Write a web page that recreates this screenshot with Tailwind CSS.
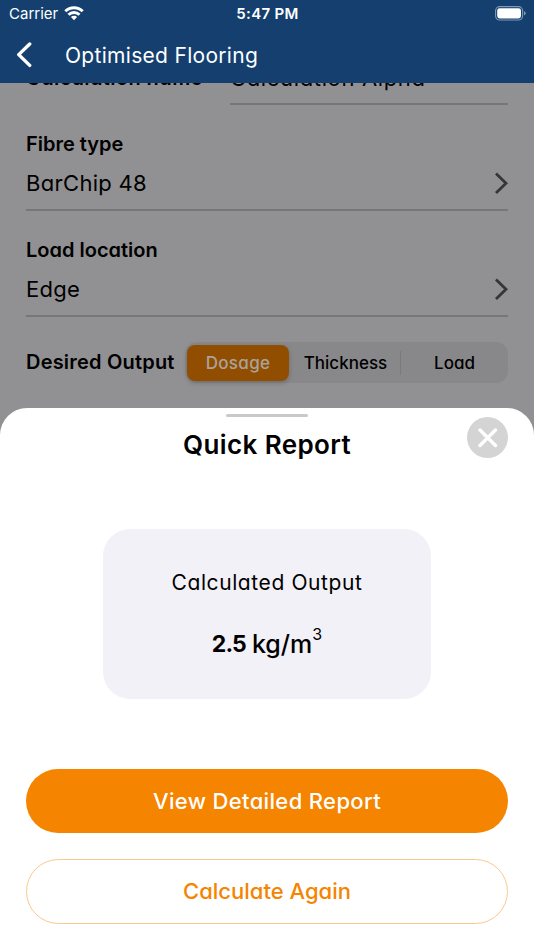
<!doctype html>
<html lang="en">
<head>
<meta charset="UTF-8">
<meta name="viewport" content="width=device-width, initial-scale=1.0">
<title>Optimised Flooring</title>
<script src="https://cdn.jsdelivr.net/npm/@tailwindcss/browser@4"></script>
</head>

<body class="flex h-[950px] w-[534px] flex-col overflow-hidden bg-[#919193] font-['Inter',sans-serif] text-black [font-feature-settings:'cv11']">

<!-- HEADER -->
<header class="h-[83px] shrink-0 bg-[#143f6f] text-white">
<div class="grid h-7 grid-cols-3 items-center pl-[9px] pr-2 font-['Inter',sans-serif] text-[15px] [font-feature-settings:normal]">
<div class="flex items-center gap-[6px]">
<span>Carrier</span>
<svg class="-mt-[2px] h-[15px] w-5" viewBox="0 0 20 15" fill="none" stroke="white" stroke-width="2.9">
<path d="M1.3 5.3a12.4 12.4 0 0 1 17.4 0"/>
<path d="M4.5 8.7a7.8 7.8 0 0 1 11 0"/>
<path d="M10 14.2 6.9 11a4.4 4.4 0 0 1 6.2 0z" fill="white" stroke="none"/>
</svg>
</div>
<span class="text-center font-semibold tracking-[0.3px]">5:47 PM</span>
<svg class="-mt-[2px] h-[15px] w-[31px] justify-self-end" viewBox="0 0 31 15">
<rect x=".6" y=".6" width="27" height="13.4" rx="4" fill="none" stroke="#8199b5" stroke-width="1.1"/>
<rect x="2.2" y="2.2" width="23.8" height="10.2" rx="2.4" fill="white"/>
<path d="M29 5v4.6q1.7-.8 1.7-2.3T29 5z" fill="#8199b5"/>
</svg>
</div>
<div class="flex h-[54px] items-center pl-4">
<svg class="h-[26px] w-[17px]" viewBox="0 0 17 26" fill="none" stroke="white" stroke-width="3.4" stroke-linecap="round" stroke-linejoin="round"><path d="M13.7 2 2.7 12.6l11 10.8"/></svg>
<h1 class="ml-8 pt-px text-[21px] tracking-[0.3px]">Optimised Flooring</h1>
</div>
</header>

<!-- FORM -->
<main class="h-[325px] shrink-0 px-[26px]">
<div class="flex h-[22px] items-end overflow-hidden">
<div class="w-[204px] shrink-0 pb-[14px] text-[20px] leading-[26px] font-semibold tracking-[0.4px] whitespace-nowrap">Calculation name</div>
<div class="flex-1 border-b-2 border-[#777779] pb-[12px] text-[22px] leading-[26px] tracking-[0.65px]">Calculation Alpha</div>
</div>

<div class="mt-[23px] h-[83px] border-b-2 border-[#777779]">
<h2 class="text-[20px] leading-8 font-semibold">Fibre type</h2>
<div class="mt-[7px] flex items-center justify-between">
<span class="text-[22px] leading-8 tracking-[0.3px]">BarChip 48</span>
<svg class="h-[22px] w-[14px]" viewBox="0 0 14 22" fill="none" stroke="#363637" stroke-width="2.8"><path d="m2 1.5 10 9.8L2 21"/></svg>
</div>
</div>

<div class="mt-[23px] h-[83px] border-b-2 border-[#777779]">
<h2 class="text-[20px] leading-8 font-semibold">Load location</h2>
<div class="mt-[7px] flex items-center justify-between">
<span class="text-[22px] leading-8 tracking-[0.3px]">Edge</span>
<svg class="h-[22px] w-[14px]" viewBox="0 0 14 22" fill="none" stroke="#363637" stroke-width="2.8"><path d="m2 1.5 10 9.8L2 21"/></svg>
</div>
</div>

<div class="mt-[25px] flex items-center">
<h2 class="w-[159px] pb-px text-[20px] font-semibold tracking-[0.2px] whitespace-nowrap">Desired Output</h2>
<div class="flex h-[41px] flex-1 items-center rounded-xl bg-[#88888a] p-[2px] text-center text-[17px] font-medium">
<span class="h-9 w-[102px] rounded-lg bg-[#924e00] leading-9 tracking-[0.3px] text-[#aaa39b] shadow-[0_2px_5px_#0003]">Dosage</span>
<span class="w-[111px] pt-[2px] pl-[2px]">Thickness</span>
<span class="h-6 w-px bg-[#7b7b7d]"></span>
<span class="flex-1 pt-[2px] pl-[2px]">Load</span>
</div>
</div>
</main>

<!-- QUICK REPORT -->
<section class="flex flex-1 flex-col items-center rounded-t-[27px] bg-white px-[26px]">
<div class="mt-[6px] h-[3px] w-[82px] rounded-full bg-[#c9c9c9]"></div>
<div class="grid w-full grid-cols-[41px_1fr_41px] items-start">
<h2 class="col-start-2 mt-[10px] text-center text-[26px] leading-9 font-semibold tracking-[0.4px]">Quick Report</h2>
<button class="flex h-[41px] w-[41px] items-center justify-center rounded-full bg-[#d4d4d4]">
<svg class="h-5 w-5" viewBox="0 0 20 20" stroke="white" stroke-width="3.4" stroke-linecap="round"><path d="m2 2 15.5 15.5m0-15.5L2 17.5"/></svg>
</button>
</div>

<div class="mt-[66px] flex h-[170px] w-[328px] flex-col items-center rounded-[27px] bg-[#f2f1f7]">
<p class="mt-[38px] text-[21px] leading-8 tracking-[0.6px]">Calculated Output</p>
<p class="mt-[29px] flex text-[23px] leading-8"><b class="tracking-[-0.9px]">2.5</b><span class="ml-[6px] text-[25px] font-medium">kg/m</span><span class="-mt-[10px] text-[16px]">3</span></p>
</div>

<button class="mt-[70px] h-16 w-full rounded-full bg-[#f58400] text-[22px] font-medium tracking-[0.35px] text-white">View Detailed Report</button>
<button class="mt-[26px] h-[65px] w-full rounded-full border border-[#fbc98f] text-[22px] font-medium text-[#f58400]">Calculate Again</button>
</section>

</body>
</html>
